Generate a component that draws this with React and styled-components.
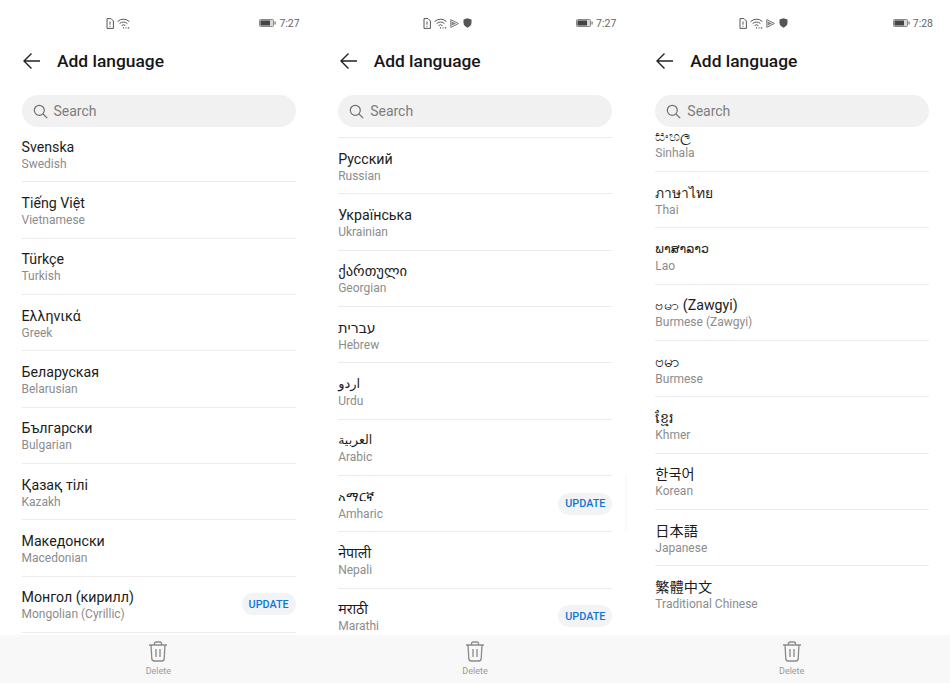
import React from "react";
import styled, { createGlobalStyle } from "styled-components";

const Global = createGlobalStyle`
  html, body { margin: 0; padding: 0; background: #fff; }
  body { font-family: Roboto, "Noto Sans", "DejaVu Sans", "Noto Sans CJK KR", sans-serif; }
`;
const Page = styled.div`
  display: grid;
  grid-template-columns: repeat(3, 1fr);
  width: 950px;
  height: 683px;
  overflow: hidden;
`;
const Phone = styled.section`
  position: relative;
  display: flex;
  flex-direction: column;
  height: 683px;
  min-width: 0;
`;
const StatusBar = styled.div`
  display: flex;
  align-items: center;
  height: 14px;
  margin-top: 16px;
  padding: 0 ${p => p.$right}px 0 ${p => p.$left}px;
  gap: 3px;
  color: #555;
`;
const Spacer = styled.div` flex: 1; `;
const Clock = styled.span`
  font-size: 10.5px;
  color: #666;
`;
const Header = styled.header`
  display: flex;
  align-items: center;
  height: 34px;
  margin-top: 14px;
  padding-left: ${p => p.$left}px;
  gap: 15px;
`;
const Title = styled.h1`
  margin: 0;
  font-size: 17.4px;
  font-weight: 500;
  color: #161616;
`;
const Search = styled.div`
  display: flex;
  align-items: center;
  gap: 6px;
  height: 32px;
  margin: 17px ${p => p.$right}px 0 ${p => p.$left}px;
  padding-left: 11px;
  border-radius: 16px;
  background: #f1f1f1;
  font-size: 14px;
  color: #7d7d7d;
`;
const ListClip = styled.div`
  flex: 1;
  min-height: 0;
  overflow: hidden;
  margin-top: 6px;
  padding: 0 ${p => p.$right}px 0 ${p => p.$left}px;
`;
const List = styled.ul`
  list-style: none;
  margin: ${p => p.$offset}px 0 0;
  padding: 0;
  border-top: ${p => (p.$ruled ? "1px solid #ececec" : "none")};
`;
const Row = styled.li`
  display: flex;
  align-items: center;
  justify-content: space-between;
  box-sizing: border-box;
  height: 56.35px;
  border-bottom: ${p => (p.$plain ? "none" : "1px solid #ececec")};
`;
const Names = styled.div`
  display: flex;
  flex-direction: column;
  padding-top: 2px;
`;
const Native = styled.span`
  font-size: ${p => p.$size || 14.2}px;
  line-height: 18px;
  color: #1c1c1c;
`;
const English = styled.span`
  font-size: 12px;
  line-height: 16px;
  color: #8c8c8c;
`;
const Update = styled.button`
  height: 22px;
  width: 54px;
  padding: 0;
  border: 0;
  border-radius: 11px;
  background: #f1f3f5;
  color: #0b78d6;
  font: 500 10.8px Roboto, sans-serif;
`;
const BottomBar = styled.footer`
  display: flex;
  flex-direction: column;
  align-items: center;
  height: 48px;
  padding-top: 6px;
  box-sizing: border-box;
  background: #f8f8f8;
`;
const DeleteLabel = styled.span`
  font-size: 9px;
  line-height: 11px;
  margin-top: 4px;
  color: #9a9a9a;
`;
const ScrollHint = styled.div`
  position: absolute;
  right: 6px;
  top: 475px;
  width: 2px;
  height: 56px;
  background: #f9f9f9;
`;

const Sim = () => (
  <svg width="8" height="11" viewBox="0 0 8 11" fill="none" stroke="#555" strokeWidth="1">
    <path d="M1 .6h4l2.4 2.4v7.4H1z" />
    <path d="M4 3.5v3.2M4 7.8v1" />
  </svg>
);
const Wifi = () => (
  <svg width="13" height="11" viewBox="0 0 13 11" fill="none" stroke="#555" strokeWidth="1">
    <path d="M.6 3.6a8.4 8.4 0 0 1 11.8 0M2.6 5.6a5.6 5.6 0 0 1 7.8 0M4.6 7.6a2.8 2.8 0 0 1 3.8 0" />
    <path d="M6 9.8h1M8.5 9.8h1M10.8 9.8h1.4" strokeWidth="1.2" />
  </svg>
);
const Play = () => (
  <svg width="9" height="9" viewBox="0 0 9 9">
    <path d="M.8.6l7.6 3.9-7.6 3.9z" fill="none" stroke="#777" strokeWidth="1" />
    <path d="M1.5 2.2l4.6 2.3-4.6 2.3z" fill="#888" />
  </svg>
);
const Shield = () => (
  <svg width="9" height="10" viewBox="0 0 9 10" style={{ marginLeft: 1 }}>
    <path d="M4.5.3l4 1.3v3.2c0 2.4-1.8 4-4 4.9-2.2-.9-4-2.5-4-4.9V1.6z" fill="#555" />
  </svg>
);
const Battery = () => (
  <svg width="17" height="8" viewBox="0 0 17 8">
    <rect x=".5" y=".5" width="14" height="7" rx="1" fill="#d8d8d8" stroke="#888" />
    <rect x="1.5" y="1.5" width="9.5" height="5" fill="#444" />
    <rect x="15.5" y="2.5" width="1.2" height="3" fill="#777" />
  </svg>
);
const Back = () => (
  <svg width="20" height="18" viewBox="0 0 20 18" fill="none" stroke="#222" strokeWidth="1.4">
    <path d="M18 9H2M9.5 1.5L2 9l7.5 7.5" />
  </svg>
);
const Lens = () => (
  <svg width="15" height="15" viewBox="0 0 15 15" fill="none" stroke="#707070" strokeWidth="1.2">
    <circle cx="6.3" cy="6.3" r="5" />
    <path d="M10 10l4.2 4.2" />
  </svg>
);
const Trash = () => (
  <svg width="20" height="21" viewBox="0 0 20 21" fill="none" stroke="#8a8a8a" strokeWidth="1.3">
    <path d="M1 4h18M6.5 4V2.6c0-1 .6-1.6 1.6-1.6h3.8c1 0 1.6.6 1.6 1.6V4" />
    <path d="M3 4l.8 13.6c.1 1.5 1 2.4 2.4 2.4h7.6c1.4 0 2.3-.9 2.4-2.4L17 4" />
    <path d="M8 8v8M12 8v8" />
  </svg>
);

const panels = [
  {
    time: "7:27", extra: false, left: 21.5, right: 21, offset: -7, statusLeft: 106, statusRight: 17, backLeft: 22,
    rows: [
      { native: "Svenska", english: "Swedish" },
      { native: "Tiếng Việt", english: "Vietnamese" },
      { native: "Türkçe", english: "Turkish" },
      { native: "Ελληνικά", english: "Greek" },
      { native: "Беларуская", english: "Belarusian" },
      { native: "Български", english: "Bulgarian" },
      { native: "Қазақ тілі", english: "Kazakh" },
      { native: "Македонски", english: "Macedonian" },
      { native: "Монгол (кирилл)", english: "Mongolian (Cyrillic)", update: true },
    ],
  },
  {
    time: "7:27", extra: true, left: 21.5, right: 21, offset: 4, ruled: true, statusLeft: 106, statusRight: 17, backLeft: 22,
    rows: [
      { native: "Русский", english: "Russian" },
      { native: "Українська", english: "Ukrainian" },
      { native: "ქართული", english: "Georgian", size: 14.6 },
      { native: "עברית", english: "Hebrew" },
      { native: "اردو", english: "Urdu", size: 13 },
      { native: "العربية", english: "Arabic", size: 12.5 },
      { native: "አማርኛ", english: "Amharic", size: 12.5, update: true },
      { native: "नेपाली", english: "Nepali" },
      { native: "मराठी", english: "Marathi", update: true },
    ],
  },
  {
    time: "7:28", extra: true, left: 22, right: 21, offset: -17.5, statusLeft: 106, statusRight: 17, backLeft: 22,
    rows: [
      { native: "සිංහල", english: "Sinhala" },
      { native: "ภาษาไทย", english: "Thai", size: 13.8 },
      { native: "ພາສາລາວ", english: "Lao", size: 12.5 },
      { native: "ဗမာ (Zawgyi)", english: "Burmese (Zawgyi)" },
      { native: "ဗမာ", english: "Burmese", size: 15.5 },
      { native: "ខ្មែរ", english: "Khmer" },
      { native: "한국어", english: "Korean" },
      { native: "日本語", english: "Japanese" },
      { native: "繁體中文", english: "Traditional Chinese", plain: true },
    ],
  },
];

export default function App() {
  return (
    <>
      <Global />
      <Page>
        {panels.map((p, i) => (
          <Phone key={i}>
            <StatusBar $left={p.statusLeft} $right={p.statusRight}>
              <Sim />
              <Wifi />
              {p.extra && <Play />}
              {p.extra && <Shield />}
              <Spacer />
              <Battery />
              <Clock>{p.time}</Clock>
            </StatusBar>
            <Header $left={p.backLeft}>
              <Back />
              <Title>Add language</Title>
            </Header>
            <Search $left={p.left} $right={p.right}>
              <Lens />
              Search
            </Search>
            <ListClip $left={p.left} $right={p.right}>
              <List $offset={p.offset} $ruled={p.ruled}>
                {p.rows.map(r => (
                  <Row key={r.english} $plain={r.plain}>
                    <Names>
                      <Native $size={r.size}>{r.native}</Native>
                      <English>{r.english}</English>
                    </Names>
                    {r.update && <Update>UPDATE</Update>}
                  </Row>
                ))}
              </List>
            </ListClip>
            <BottomBar>
              <Trash />
              <DeleteLabel>Delete</DeleteLabel>
            </BottomBar>
            {i === 1 && <ScrollHint />}
          </Phone>
        ))}
      </Page>
    </>
  );
}
